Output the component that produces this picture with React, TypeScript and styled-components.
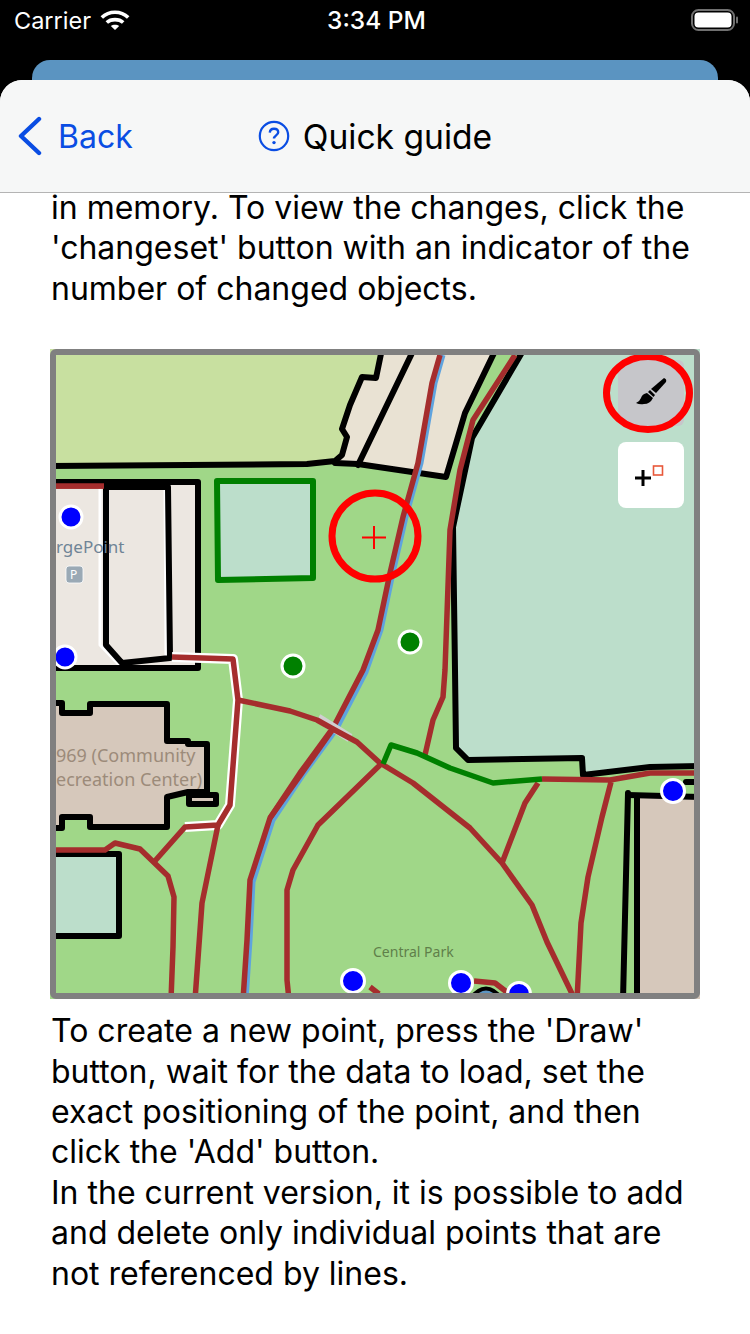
import React from "react";
import styled, { createGlobalStyle } from "styled-components";

const Global = createGlobalStyle`
  html, body { margin: 0; padding: 0; background: #000; }
  * { box-sizing: border-box; }
`;

const Page = styled.div`
  width: 750px;
  height: 1334px;
  background: #000;
  overflow: hidden;
  display: flex;
  flex-direction: column;
  font-family: Inter, "Liberation Sans", sans-serif;
`;

const StatusBar = styled.div`
  height: 40px;
  flex: none;
  display: grid;
  grid-template-columns: 1fr auto 1fr;
  align-items: center;
  padding: 0 11px 0 14px;
  color: #fff;
  font-size: 23.5px;
`;

const StatusLeft = styled.div`
  display: flex;
  align-items: center;
  gap: 9px;
`;

const Clock = styled.div`
  font-weight: 500;
  font-size: 24.5px;
`;

const StatusRight = styled.div`
  display: flex;
  justify-content: flex-end;
`;

const BackCard = styled.div`
  flex: none;
  height: 20px;
  margin: 20px 32px 0;
  background: #5b94c1;
  border-radius: 18px 18px 0 0;
`;

const Sheet = styled.div`
  flex: 1;
  min-height: 0;
  background: #fff;
  border-radius: 22px 22px 0 0;
  overflow: hidden;
`;

const NavBar = styled.div`
  position: relative;
  z-index: 1;
  height: 113px;
  background: #f6f7f7;
  border-bottom: 1px solid #b4b4b4;
  display: flex;
  align-items: center;
  padding: 0 0 0 17px;
`;

const BackButton = styled.div`
  display: flex;
  align-items: center;
  gap: 15px;
  color: #0a4de3;
  font-size: 32px;
`;

const Title = styled.div`
  display: flex;
  align-items: center;
  gap: 13px;
  margin-left: 125px;
  font-size: 33.6px;
  color: #000;
`;

const Content = styled.div`
  margin-top: -5px;
  padding: 0 50px;
`;

const Paragraph = styled.p`
  margin: 0 0 0 1px;
  font-size: 32px;
  line-height: 40.4px;
  color: #000;
  white-space: nowrap;
`;

const MapFrame = styled.svg`
  display: block;
  width: 650px;
  height: 650px;
  margin: ${(p: { $top: number; $bottom: number }) => `${p.$top}px 0 ${p.$bottom}px`};
`;

const Road = styled.polyline`
  fill: none;
  stroke: #a52d2d;
  stroke-width: 5.5;
  stroke-linejoin: round;
`;
const Stream = styled(Road)`
  stroke: #5fa3de;
  stroke-width: 5;
`;
const Casing = styled(Road)`
  stroke: #fff;
  stroke-width: 10;
`;
const BuildingEdge = styled(Road)`
  stroke: #fff;
  stroke-width: 3;
`;
const GreenWay = styled(Road)`
  stroke: #008000;
  stroke-width: 5.5;
`;
const Outline = styled(Road)`
  stroke: #000;
  stroke-width: 6;
  stroke-linecap: round;
`;
const Area = styled.polygon<{ $fill: string; $stroke?: string }>`
  fill: ${(p) => p.$fill};
  stroke: ${(p) => p.$stroke ?? "none"};
  stroke-width: 6;
  stroke-linejoin: round;
`;
const Dot = styled.circle<{ $fill: string }>`
  fill: ${(p) => p.$fill};
  stroke: #fff;
  stroke-width: 3;
`;
const Highlight = styled.ellipse`
  fill: none;
  stroke: #ff0000;
  stroke-width: 7;
`;
const Label = styled.text<{ $fill: string; $size: number }>`
  font-family: "Noto Sans", sans-serif;
  font-size: ${(p) => p.$size}px;
  fill: ${(p) => p.$fill};
`;

const pond = "#bcdecb";
const road = [
  "172,657 233,659 238,700 230,805 218,825 185,827 154,862",
  "218,825 202,903 195,1000",
  "238,700 290,711 317,720 333,729 357,742 380,763 413,783 470,828 502,863 532,905 547,942 575,1000",
  "380,765 318,825 293,870 287,890 287,980 289,1000",
  "56,850 105,850 115,843 140,849 168,876 174,897 173,947 171,1000",
  "515,355 473,420 460,470 450,530 445,670 443,697 433,720 425,755",
  "542,779 610,780 650,773 695,773",
  "538,783 525,803 502,863",
  "611,782 602,817 588,877 581,923 577,1000",
  "370,987 379,994",
  "474,981 495,983 508,993",
  "56,486 104,486",
];

const RIVER = "440,355 432,383 418,463 403,517 390,573 378,630 363,670 333,728 300,773 270,818 250,880 247,940 243,1000";
const RIVER_BLUE = "443,355 435,383 421,463 406,517 393,573 381,630 366,672 336,730 303,775 273,820 253,882 250,940 246,1000";

const Map = () => (
  <MapFrame viewBox="50 349 650 650" $top={40} $bottom={12}>
    <rect x="50" y="349" width="650" height="650" fill="#a0d788" />
    <Area $fill="#c8e0a0" points="50,349 382,349 376,378 362,377 350,405 342,429 347,437 342,455 335,461 307,463 50,466" />
    <Area $fill="#e9e2d3" points="382,349 496,349 465,413 446,477 358,465 335,461 342,455 347,437 342,429 350,405 362,377 376,378" />
    <Area $fill={pond} points="524,349 700,349 700,766 650,767 583,775 582,758 468,760 456,748 453,527 472,438" />
    <Area $fill="#d6c8bb" points="637,798 700,798 700,999 637,999" />
    <Outline points="50,466 307,464 335,461 342,455 347,437 342,429 350,405 362,377 376,378 382,349" />
    <Outline points="335,463 358,464 446,477 465,413 496,349" />
    <Outline points="414,349 358,465" />
    <Outline points="524,349 472,438 453,527 455,670 456,748 468,760 582,758 583,775 650,767 700,766" />
    <Outline points="628,793 623,1000" />
    <Outline points="637,798 637,1000" />
    <Outline points="628,795 700,797" />
    <Outline points="686,782 700,782" />
    <Stream points={RIVER_BLUE} />
    <Road points={RIVER} />

    <Area $fill="#ece7e1" points="50,484 197,484 197,666 50,666" />
    <BuildingEdge points="100,487 100,645 120,666" />
    <BuildingEdge points="165,487 166,656" />
    <Road points="56,486 104,486" />
    <Outline points="50,482 198,482 198,668 50,668" />
    <Outline points="106,487 168,487 170,658 122,663 106,645 106,487" />
    <Area $fill={pond} $stroke="#008000" points="217,481 313,481 313,578 218,580" />

    <Area $fill="#d6c8bb" $stroke="#000" points="40,703 62,703 62,713 90,713 90,704 167,704 167,741 188,741 188,744 207,744 207,792 188,792 167,797 167,827 90,827 90,817 62,817 62,828 40,828" />
    <Area $fill="#d6c8bb" $stroke="#000" points="189,795 216,795 216,804 189,804" />
    <Area $fill={pond} $stroke="#000" points="40,854 119,854 119,936 40,936" />

    <Casing points="172,657 233,659 238,700 230,805 218,825 185,827" />
    <polyline points="318,718 350,738" fill="none" stroke="#cfcfcf" strokeWidth="9" />
    {road.map((p) => (
      <Road key={p} points={p} />
    ))}
    <Road points="333,729 270,818" />
    <GreenWay points="383,764 391,745 417,753 450,768 493,783 542,779" />

    <Label $fill="#6f8496" $size={17} x="56" y="553">rgePoint</Label>
    <rect x="66" y="566" width="17" height="17" rx="3" fill="#9aa9b5" stroke="#fff" strokeWidth="0.8" />
    <Label $fill="#fff" $size={12} x="70" y="579">P</Label>
    <Label $fill="#9c8b7a" $size={18} x="56" y="762">969 (Community</Label>
    <Label $fill="#9c8b7a" $size={18} x="56" y="786">ecreation Center)</Label>
    <Label $fill="#5f7f4a" $size={14} x="373" y="957">Central Park</Label>

    <path d="M470 999 Q486 978 502 999 Z" fill="#5b94c1" stroke="#000" strokeWidth="4" />
    <Dot $fill="#0000ff" cx="71" cy="517" r="11" />
    <Dot $fill="#0000ff" cx="65" cy="657" r="11" />
    <Dot $fill="#0000ff" cx="673" cy="791" r="11.5" />
    <Dot $fill="#0000ff" cx="353" cy="981" r="11.5" />
    <Dot $fill="#0000ff" cx="461" cy="983" r="11.5" />
    <Dot $fill="#0000ff" cx="519" cy="994" r="11.5" />
    <Dot $fill="#008000" cx="293" cy="666" r="11" />
    <Dot $fill="#008000" cx="410" cy="642" r="11" />

    <rect x="618" y="360" width="66" height="66" rx="6" fill="#c6c6ca" />
    <path d="M664 378 Q667 379 666 382 L656 393 L651 389 Z" fill="#000" />
    <path d="M650 390 L655 395 L653.5 397 L648 392 Z" fill="#000" />
    <path d="M647 393 L653 398 Q650 404 644 404 Q640 405 636 403 Q640 401 641 398 Q642 394 647 393 Z" fill="#000" />
    <rect x="618" y="442" width="66" height="66" rx="8" fill="#fff" />
    <path d="M635 478 H651 M643 470 V486" stroke="#000" strokeWidth="3" fill="none" />
    <rect x="653.5" y="466" width="9" height="9" fill="none" stroke="#e8583a" strokeWidth="1.6" />

    <Highlight cx="375" cy="536" rx="43" ry="43" />
    <path d="M362 537.5 H386 M374 526 V549" stroke="#ff0000" strokeWidth="2" fill="none" />
    <Highlight cx="648" cy="393" rx="41.5" ry="36.5" />

    <rect x="53" y="352" width="644" height="644" rx="3" fill="none" stroke="#808080" strokeWidth="6" />
  </MapFrame>
);

export default function App() {
  return (
    <Page>
      <Global />
      <StatusBar>
        <StatusLeft>
          <span>Carrier</span>
          <svg width="30" height="22" viewBox="0 0 30 22" fill="none" stroke="#fff" strokeWidth="3.6">
            <path d="M1.8 8.5 C9 1.5 21 1.5 28.2 8.5" />
            <path d="M6.8 13.5 C11 9.6 19 9.6 23.2 13.5" />
            <path d="M15 21 L10.8 17 C13 15.2 17 15.2 19.2 17 Z" fill="#fff" stroke="none" />
          </svg>
        </StatusLeft>
        <Clock>3:34 PM</Clock>
        <StatusRight>
          <svg width="48" height="22" viewBox="0 0 48 22">
            <rect x="1" y="1" width="42" height="20" rx="6.5" fill="none" stroke="#707070" strokeWidth="2" />
            <rect x="3.5" y="3.5" width="37" height="15" rx="4" fill="#fff" />
            <rect x="45" y="7.5" width="2" height="7" rx="1" fill="#707070" />
          </svg>
        </StatusRight>
      </StatusBar>
      <BackCard />
      <Sheet>
        <NavBar>
          <BackButton>
            <svg width="26" height="40" viewBox="0 0 26 40" fill="none" stroke="#0a4de3" strokeWidth="4.4" strokeLinecap="round" strokeLinejoin="round">
              <path d="M22 3 L4 20 L22 37" />
            </svg>
            <span>Back</span>
          </BackButton>
          <Title>
            <svg width="32" height="32" viewBox="0 0 32 32" fill="none">
              <circle cx="16" cy="16" r="14.2" stroke="#0a4de3" strokeWidth="2.2" />
              <path d="M11.8 12.6 C12 9.8 14 8.8 16 8.8 C18.4 8.8 20.2 10.2 20.2 12.3 C20.2 15.4 16 15.4 16 18.6" stroke="#0a4de3" strokeWidth="2.4" />
              <circle cx="16" cy="22.6" r="1.7" fill="#0a4de3" />
            </svg>
            <span>Quick guide</span>
          </Title>
        </NavBar>
        <Content>
          <Paragraph>
            in memory. To view the changes, click the<br />
            'changeset' button with an indicator of the<br />
            number of changed objects.
          </Paragraph>
          <Map />
          <Paragraph>
            To create a new point, press the 'Draw'<br />
            button, wait for the data to load, set the<br />
            exact positioning of the point, and then<br />
            click the 'Add' button.<br />
            In the current version, it is possible to add<br />
            and delete only individual points that are<br />
            not referenced by lines.
          </Paragraph>
        </Content>
      </Sheet>
    </Page>
  );
}
